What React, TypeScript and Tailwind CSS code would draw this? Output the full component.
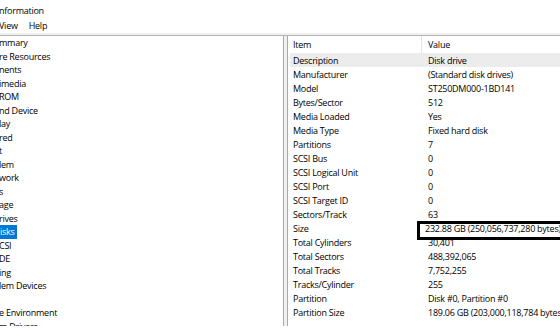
import React from "react";

const tree: { t: string; sel?: boolean }[] = [
  { t: "mmary" },
  { t: "re Resources" },
  { t: "nents" },
  { t: "imedia" },
  { t: "ROM" },
  { t: "nd Device" },
  { t: "lay" },
  { t: "red" },
  { t: "t" },
  { t: "lem" },
  { t: "work" },
  { t: "s" },
  { t: "age" },
  { t: "rives" },
  { t: "isks", sel: true },
  { t: "CSI" },
  { t: "DE" },
  { t: "ing" },
  { t: "lem Devices" },
  { t: "" },
  { t: "e Environment" },
  { t: "m Drivers" },
];

const rows: [string, string][] = [
  ["Description", "Disk drive"],
  ["Manufacturer", "(Standard disk drives)"],
  ["Model", "ST250DM000-1BD141"],
  ["Bytes/Sector", "512"],
  ["Media Loaded", "Yes"],
  ["Media Type", "Fixed hard disk"],
  ["Partitions", "7"],
  ["SCSI Bus", "0"],
  ["SCSI Logical Unit", "0"],
  ["SCSI Port", "0"],
  ["SCSI Target ID", "0"],
  ["Sectors/Track", "63"],
  ["Size", "232.88 GB (250,056,737,280 bytes)"],
  ["Total Cylinders", "30,401"],
  ["Total Sectors", "488,392,065"],
  ["Total Tracks", "7,752,255"],
  ["Tracks/Cylinder", "255"],
  ["Partition", "Disk #0, Partition #0"],
  ["Partition Size", "189.06 GB (203,000,118,784 bytes)"],
  ["Partition Starting Offset", "1,048,576 bytes"],
];

export default function App() {
  return (
    <div
      className="relative w-[560px] h-[336px] bg-white overflow-hidden text-black text-[9px] leading-none tracking-[-0.25px]"
      style={{ fontFamily: '"Open Sans", "Noto Sans", sans-serif' }}
    >
      <div className="h-[18px] pt-[2px] flex items-center whitespace-nowrap">
        <span className="-ml-[1px]">nformation</span>
      </div>
      <div className="h-[15px] flex items-center whitespace-nowrap">
        <span className="-ml-[1px]">View</span>
        <span className="ml-[11px]">Help</span>
      </div>
      <div className="h-[3px] bg-[#f0f0f0] border-b border-[#b4b4b4]" />
      <div className="flex h-[290px]">
        <div className="w-[284px] shrink-0 border-r border-[#a9a9a9] overflow-hidden">
          {tree.map((it, i) => (
            <div key={i} className="h-[13.5px] flex items-center whitespace-nowrap">
              <span
                className={
                  it.sel
                    ? "-ml-[1px] pl-[1px] pr-[2px] h-[13.5px] flex items-center bg-[#0078d7] text-white"
                    : "-ml-[1px]"
                }
              >
                {it.t}
              </span>
            </div>
          ))}
        </div>
        <div className="w-[3px] shrink-0 bg-[#f0f0f0]" />
        <div className="flex-1 border-l border-[#a9a9a9] pl-[2px]">
          <div className="h-[287px] overflow-hidden">
            <div className="h-[17px] flex items-center whitespace-nowrap">
              <div className="w-[131px] shrink-0 pl-[3px]">Item</div>
              <div className="h-full flex items-center border-l border-[#e5e5e5] pl-[6px]">Value</div>
            </div>
            {rows.map(([k, v], i) => (
              <div
                key={k}
                className={
                  "h-[14px] flex items-center whitespace-nowrap " + (i === 0 ? "bg-[#ececec]" : "")
                }
              >
                <div className="w-[131px] shrink-0 pl-[3px]">{k}</div>
                <div className={k === "Size" ? "pl-[4px]" : "pl-[7px]"}>{v}</div>
              </div>
            ))}
          </div>
        </div>
      </div>
      <div className="absolute left-[417px] top-[221px] w-[160px] h-[19px] border-[3px] border-black" />
    </div>
  );
}
